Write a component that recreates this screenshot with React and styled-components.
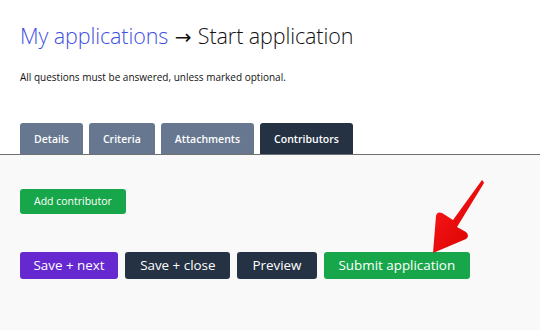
import React from "react";
import styled, { createGlobalStyle } from "styled-components";

const Global = createGlobalStyle`
  html, body { margin: 0; padding: 0; background: #ffffff; }
  body { font-family: "Open Sans", "Noto Sans", sans-serif; color: #111; }
`;

const Page = styled.div`
  width: 540px;
  height: 330px;
  display: flex;
  flex-direction: column;
  overflow: hidden;
`;

const Header = styled.header`
  padding: 20px 20px 0 20px;
`;

const Title = styled.h1`
  margin: 0;
  font-size: 21.5px;
  font-weight: 300;
  line-height: 32px;
  letter-spacing: -0.1px;
  color: #111;
`;

const Crumb = styled.a`
  color: #3e50e0;
  text-decoration: none;
`;

const Sep = styled.span`
  font-family: "Noto Sans", "DejaVu Sans", sans-serif;
  font-weight: 400;
  font-size: 20px;
  margin: 0 1px;
`;

const Note = styled.p`
  margin: 17px 0 0 0;
  font-size: 10px;
  line-height: 14px;
  color: #111;
`;

const Tabs = styled.nav`
  display: flex;
  gap: 6px;
  padding: 0 20px;
  margin-top: 39px;
  border-bottom: 1px solid #6f6f6f;
`;

const Tab = styled.button`
  height: 31px;
  padding: 0 14px;
  border: none;
  border-radius: 3px 3px 0 0;
  background: ${(p) => (p.$active ? "#243244" : "#66778f")};
  color: #fff;
  font-family: inherit;
  font-size: 10.5px;
  font-weight: 600;
  cursor: pointer;
`;

const Body = styled.main`
  flex: 1;
  background: #f9f9f9;
  padding: 33px 20px 0 20px;
  position: relative;
`;

const Button = styled.button`
  height: ${(p) => (p.$small ? 25 : 27)}px;
  padding: 0 ${(p) => p.$pad ?? (p.$small ? 14 : 15)}px;
  border: none;
  border-radius: 3px;
  background: ${(p) => p.$bg};
  color: #fff;
  font-family: inherit;
  font-size: ${(p) => (p.$small ? 10.5 : 13.4)}px;
  font-weight: 500;
  cursor: pointer;
`;

const Actions = styled.div`
  display: flex;
  gap: 7px;
  margin-top: 38px;
`;

const Arrow = styled.svg`
  position: absolute;
  left: 420px;
  top: 20px;
  pointer-events: none;
`;

export default function App() {
  return (
    <Page>
      <Global />
      <Header>
        <Title>
          <Crumb href="#">My applications</Crumb> <Sep>→</Sep> Start application
        </Title>
        <Note>All questions must be answered, unless marked optional.</Note>
      </Header>
      <Tabs>
        <Tab>Details</Tab>
        <Tab>Criteria</Tab>
        <Tab>Attachments</Tab>
        <Tab $active>Contributors</Tab>
      </Tabs>
      <Body>
        <Button $small $bg="#17a74a">Add contributor</Button>
        <Actions>
          <Button $bg="#6529cf" $pad={13.5}>Save + next</Button>
          <Button $bg="#243244">Save + close</Button>
          <Button $bg="#243244">Preview</Button>
          <Button $bg="#17a74a">Submit application</Button>
        </Actions>
        <Arrow width="80" height="90" viewBox="0 0 80 90">
          <defs>
            <linearGradient id="rg" x1="0" y1="0" x2="1" y2="1">
              <stop offset="0" stopColor="#ff1a1a" />
              <stop offset="1" stopColor="#d40000" />
            </linearGradient>
          </defs>
          <path
            d="M63 6 L62 5 L33 45 L22 38 Q17 36 16 41 L13 78 L46 64 Q50 61 46 57 L37 52 L64 8 Z"
            fill="url(#rg)"
          />
        </Arrow>
      </Body>
    </Page>
  );
}
